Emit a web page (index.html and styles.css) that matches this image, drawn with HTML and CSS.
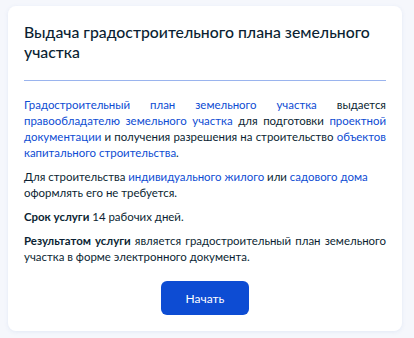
FILE: index.html
```html
<!DOCTYPE html>
<html lang="ru">
<head>
<meta charset="utf-8">
<link rel="stylesheet" href="styles.css">
</head>
<body>
<div class="card">
  <h1 class="title">Выдача градостроительного плана земельного участка</h1>
  <div class="divider"></div>
  <div class="content">
    <p class="justify"><a class="link">Градостроительный план земельного участка</a> выдается <a class="link">правообладателю земельного участка</a> для подготовки <a class="link">проектной документации</a> и получения разрешения на строительство <a class="link">объектов капитального строительства</a>.</p>
    <p>Для строительства <a class="link">индивидуального жилого</a> или <a class="link">садового дома</a> оформлять его не требуется.</p>
    <p><b>Срок услуги</b> 14 рабочих дней.</p>
    <p class="justify"><b>Результатом услуги</b> является градостроительный план земельного участка в форме электронного документа.</p>
  </div>
  <div class="actions">
    <button class="btn">Начать</button>
  </div>
</div>
</body>
</html>
```
FILE: styles.css
```css
html, body {
  margin: 0;
  padding: 0;
}
body {
  background: #f5f7fc;
  font-family: Lato, "Noto Sans", sans-serif;
  color: #0b1f33;
  padding: 6px 12px 7px 8px;
}
.card {
  background: #ffffff;
  border-radius: 8px;
  box-shadow: 0 1px 4px rgba(100, 130, 200, 0.12);
  padding: 16px 16px 16px 16px;
}
.title {
  margin: 0;
  font-size: 15.8px;
  line-height: 20px;
  font-weight: 500;
  color: #0b1f33;
}
.divider {
  height: 1px;
  background: #9ab4ee;
  margin: 18px 0 16px 0;
}
.content p {
  margin: 0 0 8px 0;
  font-size: 11.45px;
  line-height: 16px;
}
.content p:last-child {
  margin-bottom: 0;
}
.content p.justify {
  text-align: justify;
}
.content b {
  font-weight: 700;
}
.link {
  color: #0d4cd3;
  text-decoration: none;
}
.actions {
  display: flex;
  justify-content: center;
  padding-top: 16px;
}
.btn {
  width: 88px;
  height: 34px;
  border: none;
  border-radius: 6px;
  background: #0d4cd3;
  color: #ffffff;
  font-family: Lato, "Noto Sans", sans-serif;
  font-size: 12px;
  padding: 0;
}
```
